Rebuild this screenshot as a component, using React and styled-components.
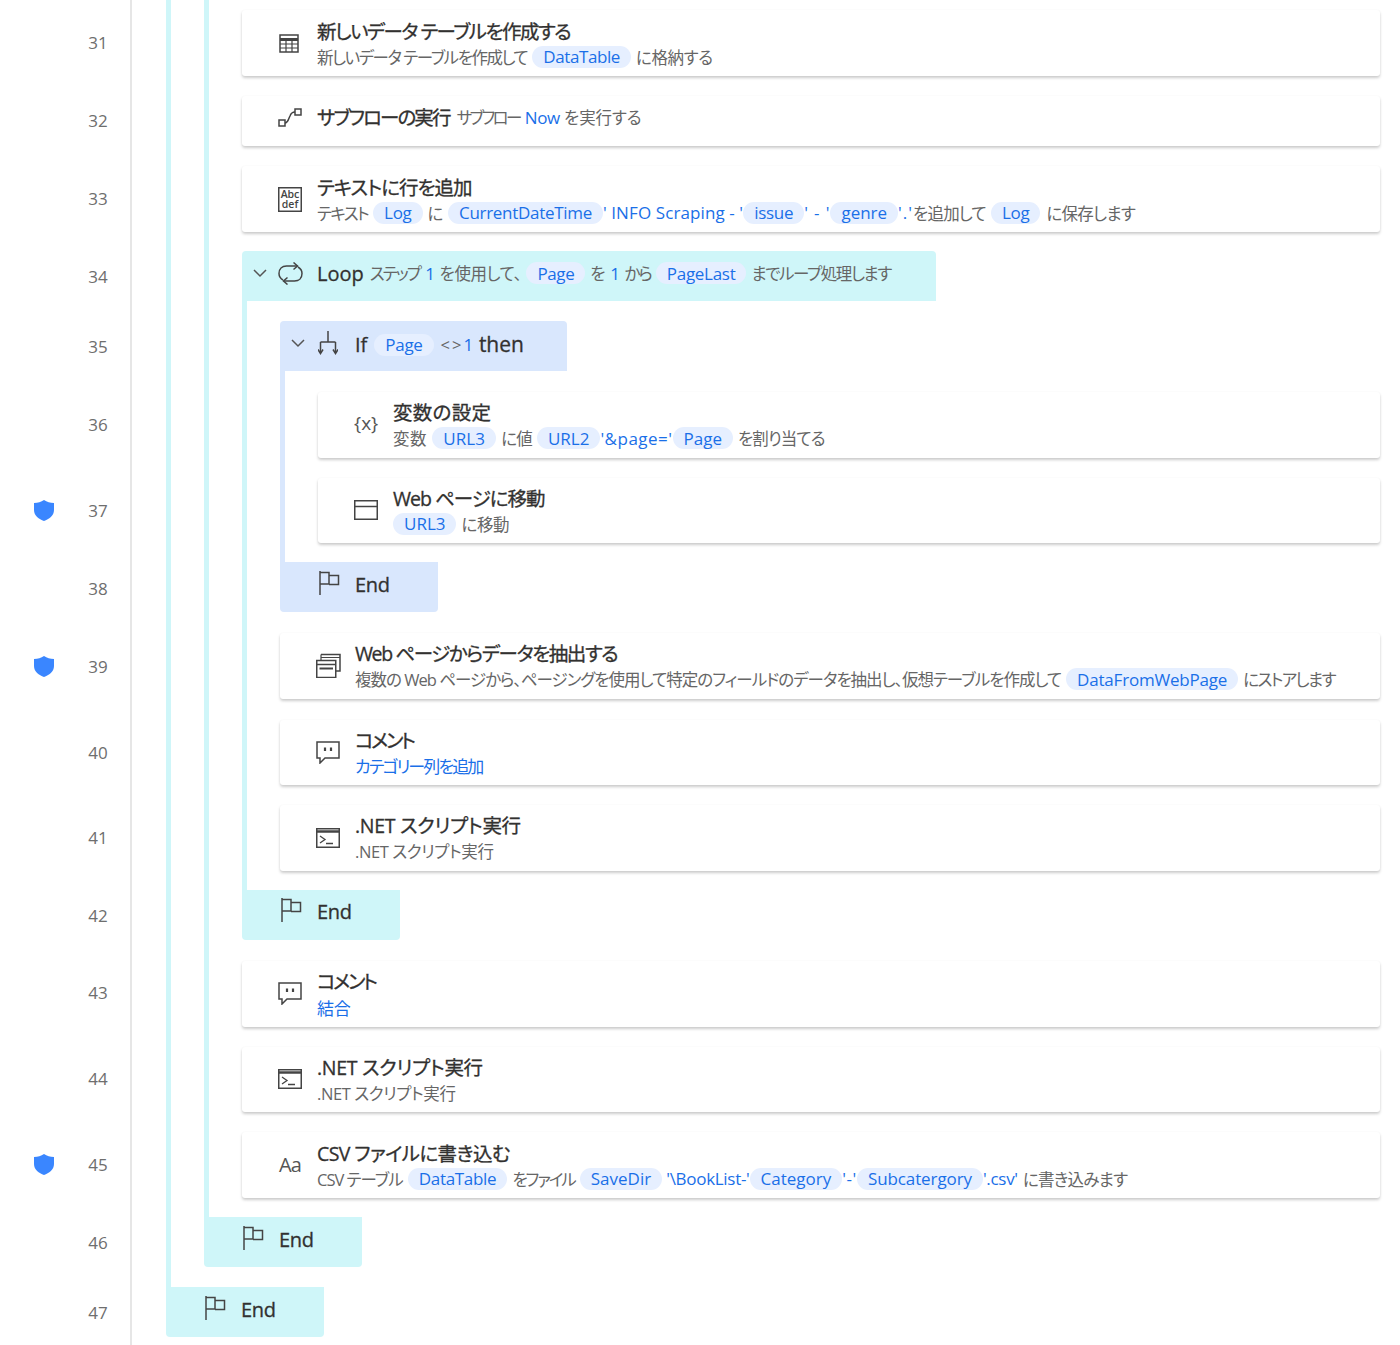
import React from "react";
import styled, { createGlobalStyle } from "styled-components";

const Global = createGlobalStyle`
  html, body { margin: 0; padding: 0; background: #fff; }
  body {
    width: 1400px; height: 1345px; overflow: hidden;
    font-family: "Open Sans", "Noto Sans CJK JP", sans-serif;
    font-feature-settings: "palt";
    color: #323130;
  }
`;

const CYAN = "#cff6f9";
const BLUE = "#d9e7fd";
const INK = "#444";

const Page = styled.div`display: flex; height: 1345px; overflow: hidden;`;
const Gutter = styled.div`flex: none; width: 130px; border-right: 2px solid #e6e6e6;`;
const LineCell = styled.div`
  display: grid; grid-template-columns: 34px 20px 25px 38px; align-items: center;
  height: ${p => p.$h}px;
`;
const LineNo = styled.span`
  grid-column: 4; text-align: center; font-size: 17px; color: #6e6e6e; margin-top: -1px;
`;
const ShieldSlot = styled.span`grid-column: 2; display: flex; margin-top: -2px;`;

const Main = styled.div`flex: 1; min-width: 0; padding: 0 20px 0 34px;`;
const Rail = styled.div`
  display: flex; flex-direction: column;
  border-left: 5px solid ${p => p.$color || CYAN};
  padding-left: 33px;
  padding-bottom: ${p => p.$pb || 0}px;
`;

const Card = styled.div`
  display: flex; align-items: center; flex: none; box-sizing: border-box;
  height: ${p => p.$h || 65.5}px;
  margin-top: ${p => p.$mt ?? 20}px;
  padding: 0 0 ${p => p.$pb || 0}px 36px;
  background: #fff; border-radius: 3px;
  box-shadow: 0 2px 3px rgba(0,0,0,.2), 0 0 2px rgba(0,0,0,.03);
`;
const IconSlot = styled.span`
  flex: none; width: 39px; display: flex; align-items: center; box-sizing: border-box;
  padding-left: ${p => p.$pl || 0}px;
`;
const TextCol = styled.div`display: flex; flex-direction: column; white-space: nowrap; padding-top: 2px;`;
const Line = styled.div`display: flex; align-items: center; white-space: nowrap;`;
const Title = styled.span`
  font-size: 19.5px; line-height: 25px; font-weight: 400; color: #323130;
  -webkit-text-stroke: 0.3px #323130;
  letter-spacing: ${p => p.$ls ?? -0.3}px; margin-right: ${p => p.$mr || 0}px;
`;
const SubLine = styled(Line)`height: 26px; font-size: 17px;`;
const IfLine = styled(SubLine)`margin-top: 3px;`;
const Gray = styled.span`
  color: #666; letter-spacing: ${p => p.$ls ?? -0.4}px; font-size: 16.5px;
  margin-left: ${p => p.$ml ?? 5}px;
  margin-right: ${p => p.$mr ?? 5}px;
  &:first-child { margin-left: 0; }
`;
const Lit = styled.span`color: #1a6fe8; letter-spacing: ${p => p.$ls ?? -0.3}px;`;
const Pill = styled.span`
  display: inline-flex; align-items: center; height: 22px; padding: 0 11px;
  border-radius: 11px; background: #e6efff; color: #1a6fe8;
  letter-spacing: ${p => p.$ls ?? -0.3}px;
  font-size: 17px;
`;
const Header = styled.div`
  display: flex; align-items: center; flex: none;
  width: ${p => p.$w}px; height: 50px; margin-top: ${p => p.$mt ?? 20}px;
  padding: 0 0 6px 11px; box-sizing: border-box;
  background: ${p => p.$bg}; border-radius: 4px 4px 0 0;
`;
const Chevron = styled.svg`flex: none; width: 14px; height: 9px; margin-right: 11px;`;
const HeaderIcon = styled.span`
  flex: none; width: 39px; display: flex; box-sizing: border-box;
  padding-left: ${p => p.$pl || 0}px;
`;
const EndBar = styled.div`
  display: flex; align-items: center; flex: none; box-sizing: border-box;
  width: 158px; height: 50px; padding: 0 0 6px 39px;
  background: ${p => p.$bg}; border-radius: 0 0 4px 4px;
`;
const EndIcon = styled.span`flex: none; width: 36px; display: flex; margin-top: -3px;`;
const EndText = styled.span`
  font-size: 20px; font-weight: 400; color: #323130; letter-spacing: -0.3px;
  -webkit-text-stroke: 0.3px #323130;
`;
const Glyph = styled.span`
  font-size: ${p => p.$size || 18}px; color: #555; line-height: 1;
  letter-spacing: ${p => p.$ls || 0}px; margin-top: ${p => p.$mt || 0}px;
`;
const BlockTitle = styled(Title)`font-size: ${p => p.$size || 20}px; letter-spacing: 0; margin-left: ${p => p.$ml || 0}px;`;
const Spacer = styled.div`flex: none; height: 19px;`;

const Svg = ({ w, h, children }) => (
  <svg width={w} height={h} viewBox={`0 0 ${w} ${h}`} fill="none" stroke={INK} strokeWidth="1.5">{children}</svg>
);
const TableIcon = () => (
  <Svg w={20} h={19}>
    <rect x="1" y="1" width="18" height="17" />
    <path d="M1 5.5H19" strokeWidth="3" />
    <path d="M1 10H19M1 14H19M7 5V18M13 5V18" strokeWidth="1.2" />
  </Svg>
);
const SubflowIcon = () => (
  <Svg w={24} h={19}>
    <rect x="1" y="12" width="6" height="6" />
    <rect x="17" y="1" width="6" height="6" />
    <path d="M7 15C10 15 10 12 12 8C13 5 14 4 17 4" />
  </Svg>
);
const AbcIcon = () => (
  <svg width="24" height="25" viewBox="0 0 24 25">
    <rect x=".75" y=".75" width="22.5" height="23.5" fill="none" stroke={INK} strokeWidth="1.5" />
    <text textAnchor="middle" fontSize="10.5" fontWeight="600" fill={INK} fontFamily="Open Sans">
      <tspan x="12" y="11">Abc</tspan>
      <tspan x="12" y="21">def</tspan>
    </text>
  </svg>
);
const BrowserIcon = () => (
  <Svg w={24} h={20}>
    <rect x=".75" y=".75" width="22.5" height="18.5" />
    <path d="M1 6.5H23" />
  </Svg>
);
const StackIcon = () => (
  <Svg w={25} h={25}>
    <path d="M5 1.5H24V18H20" />
    <path d="M5 1.5V7M5 4.5H24" strokeWidth="1.2" />
    <rect x=".75" y="7.5" width="19" height="17" />
    <path d="M1 11.5H19" />
    <path d="M3.5 15.5H17" strokeWidth="2" />
  </Svg>
);
const CommentIcon = () => (
  <Svg w={24} h={23}>
    <path d="M1 1H23V17H9L4 22V17H1Z" />
    <path d="M9 6.5V10M15 6.5V10" strokeWidth="2.2" />
  </Svg>
);
const ScriptIcon = () => (
  <Svg w={24} h={20}>
    <rect x=".75" y=".75" width="22.5" height="18.5" />
    <path d="M1 3.5H23" strokeWidth="2.5" />
    <path d="M4 8L9 11.5L4 15M10 15.5H17" strokeWidth="1.3" />
  </Svg>
);
const FlagIcon = () => (
  <Svg w={21} h={24}>
    <path d="M1 0V24" />
    <path d="M1 1.5H10V13H1" />
    <path d="M10 4.5H19.5V13.5H10" />
  </Svg>
);
const LoopIcon = () => (
  <Svg w={25} h={23}>
    <path d="M5 18C2.5 16.5 1 14 1 11.5C1 7 4 4 8.5 4H19.5" />
    <path d="M15.5 .5L19.5 4L15.5 7.5" />
    <path d="M20 5C22.5 6.5 24 9 24 11.5C24 16 21 19 16.5 19H5.5" />
    <path d="M9.5 15.5L5.5 19L9.5 22.5" />
  </Svg>
);
const IfIcon = () => (
  <Svg w={20} h={24}>
    <path d="M10 0V11M2.5 11H17.5M2.5 11V22M17.5 11V22" />
    <path d="M0 18.5L2.5 22.5L5 18.5M15 18.5L17.5 22.5L20 18.5" />
  </Svg>
);
const Shield = () => (
  <svg width="20" height="21" viewBox="0 0 20 21">
    <path d="M10 0C13 2 16 3 20 3V10C20 16 15 19 10 21C5 19 0 16 0 10V3C4 3 7 2 10 0Z" fill="#3a86ff" />
  </svg>
);
const Chev = () => (
  <Chevron viewBox="0 0 14 9" fill="none" stroke="#555" strokeWidth="1.5"><path d="M1 1L7 7L13 1" /></Chevron>
);
const End = ({ bg }) => (
  <EndBar $bg={bg}><EndIcon><FlagIcon /></EndIcon><EndText>End</EndText></EndBar>
);

const lines = [
  [31, 86], [32, 70], [33, 86], [34, 70], [35, 70], [36, 86], [37, 86, 1], [38, 70], [39, 86, 1],
  [40, 85], [41, 86], [42, 69], [43, 86], [44, 86], [45, 86, 1], [46, 70], [47, 70],
];

const DOTNET = ".NET スクリプト実行";

export default function App() {
  return (
    <Page>
      <Global />
      <Gutter>
        {lines.map(([n, h, s]) => (
          <LineCell key={n} $h={h}>
            {s ? <ShieldSlot><Shield /></ShieldSlot> : null}
            <LineNo>{n}</LineNo>
          </LineCell>
        ))}
      </Gutter>
      <Main>
        <Rail $pb={20}>
          <Rail>
            <Card $mt={10} $h={66}>
              <IconSlot $pl={1}><TableIcon /></IconSlot>
              <TextCol>
                <Title $ls={-1.5}>新しいデータ テーブルを作成する</Title>
                <SubLine><Gray $ls={-1.45}>新しいデータ テーブルを作成して</Gray><Pill $ls={-0.4}>DataTable</Pill><Gray>に格納する</Gray></SubLine>
              </TextCol>
            </Card>
            <Card $h={50} $pb={8}>
              <IconSlot><SubflowIcon /></IconSlot>
              <SubLine>
                <Title $ls={-1.9} $mr={2}>サブフローの実行</Title>
                <Gray $ls={-2.6}>サブフロー</Gray><Lit>Now</Lit><Gray $ml={4} $ls={-0.1}>を実行する</Gray>
              </SubLine>
            </Card>
            <Card $h={66}>
              <IconSlot><AbcIcon /></IconSlot>
              <TextCol>
                <Title $ls={-0.95}>テキストに行を追加</Title>
                <SubLine>
                  <Gray $ls={-1.6}>テキスト</Gray><Pill>Log</Pill><Gray>に</Gray><Pill>CurrentDateTime</Pill>
                  <Lit $ls={0.1}>' INFO Scraping - '</Lit><Pill>issue</Pill><Lit $ls={0.9}>' - '</Lit><Pill $ls={0}>genre</Pill>
                  <Lit $ls={1}>'.'</Lit><Gray $ml={0} $ls={-0.8}>を追加して</Gray><Pill>Log</Pill><Gray $ml={6} $ls={-0.7}>に保存します</Gray>
                </SubLine>
              </TextCol>
            </Card>

            <Header $w={694} $bg={CYAN} $mt={19}>
              <Chev />
              <HeaderIcon><LoopIcon /></HeaderIcon>
              <SubLine>
                <BlockTitle $mr={1}>Loop</BlockTitle>
                <Gray $ls={-1.9}>ステップ</Gray><Lit>1</Lit><Gray>を使用して、</Gray><Pill $ls={-0.4}>Page</Pill><Gray>を</Gray><Lit>1</Lit><Gray $ls={-2}>から</Gray><Pill>PageLast</Pill><Gray $ls={-1.4}>までループ処理します</Gray>
              </SubLine>
            </Header>
            <Rail>
              <Header $w={287} $bg={BLUE}>
                <Chev />
                <HeaderIcon $pl={2}><IfIcon /></HeaderIcon>
                <IfLine>
                  <BlockTitle $mr={7}>If</BlockTitle>
                  <Pill>Page</Pill>
                  <Gray $ml={7} $mr={0} $ls={2}>&lt;&gt;</Gray><Lit>1</Lit>
                  <BlockTitle $ml={6} $size={21}>then</BlockTitle>
                </IfLine>
              </Header>
              <Rail $color={BLUE}>
                <Card $mt={21}>
                  <IconSlot><Glyph $size={19} $mt={-3}>{"{x}"}</Glyph></IconSlot>
                  <TextCol>
                    <Title $ls={0.3}>変数の設定</Title>
                    <SubLine>
                      <Gray $ls={0.6}>変数</Gray><Pill $ls={0.1}>URL3</Pill><Gray $ls={-0.8}>に値</Gray><Pill $ls={0}>URL2</Pill><Lit $ls={0.5}>'&amp;page='</Lit><Pill $ls={0}>Page</Pill><Gray $ls={-0.9}>を割り当てる</Gray>
                    </SubLine>
                  </TextCol>
                </Card>
                <Card>
                  <IconSlot><BrowserIcon /></IconSlot>
                  <TextCol>
                    <Title $ls={-1}>Web ページに移動</Title>
                    <SubLine><Pill $ls={0}>URL3</Pill><Gray>に移動</Gray></SubLine>
                  </TextCol>
                </Card>
                <Spacer />
              </Rail>
              <End bg={BLUE} />
              <Card $mt={21}>
                <IconSlot><StackIcon /></IconSlot>
                <TextCol>
                  <Title $ls={-1.4}>Web ページからデータを抽出する</Title>
                  <SubLine>
                    <Gray $ls={-0.98}>複数の Web ページから、ページングを使用して特定のフィールドのデータを抽出し、仮想テーブルを作成して</Gray><Pill $ls={-0.2}>DataFromWebPage</Pill><Gray $ls={-1.6}>にストアします</Gray>
                  </SubLine>
                </TextCol>
              </Card>
              <Card $mt={21}>
                <IconSlot><CommentIcon /></IconSlot>
                <TextCol>
                  <Title $ls={-2.3}>コメント</Title>
                  <SubLine><Lit $ls={-1.9}>カテゴリー列を追加</Lit></SubLine>
                </TextCol>
              </Card>
              <Card>
                <IconSlot><ScriptIcon /></IconSlot>
                <TextCol>
                  <Title>{DOTNET}</Title>
                  <SubLine><Gray>{DOTNET}</Gray></SubLine>
                </TextCol>
              </Card>
              <Spacer />
            </Rail>
            <End bg={CYAN} />
            <Card $mt={21} $h={66}>
              <IconSlot><CommentIcon /></IconSlot>
              <TextCol>
                <Title $ls={-2.3}>コメント</Title>
                <SubLine><Lit>結合</Lit></SubLine>
              </TextCol>
            </Card>
            <Card>
              <IconSlot><ScriptIcon /></IconSlot>
              <TextCol>
                <Title>{DOTNET}</Title>
                <SubLine><Gray>{DOTNET}</Gray></SubLine>
              </TextCol>
            </Card>
            <Card $h={66}>
              <IconSlot $pl={1}><Glyph $size={20} $ls={-1}>Aa</Glyph></IconSlot>
              <TextCol>
                <Title $ls={-0.6}>CSV ファイルに書き込む</Title>
                <SubLine>
                  <Gray $ls={-1}>CSV テーブル</Gray><Pill>DataTable</Pill><Gray $ls={-2}>をファイル</Gray><Pill $ls={0}>SaveDir</Pill><Lit>&nbsp;'\BookList-'</Lit><Pill $ls={0}>Category</Pill><Lit $ls={0.6}>'-'</Lit><Pill $ls={-0.1}>Subcatergory</Pill><Lit>'.csv'</Lit><Gray $ls={-0.7}>に書き込みます</Gray>
                </SubLine>
              </TextCol>
            </Card>
            <Spacer />
          </Rail>
          <End bg={CYAN} />
        </Rail>
        <End bg={CYAN} />
      </Main>
    </Page>
  );
}
